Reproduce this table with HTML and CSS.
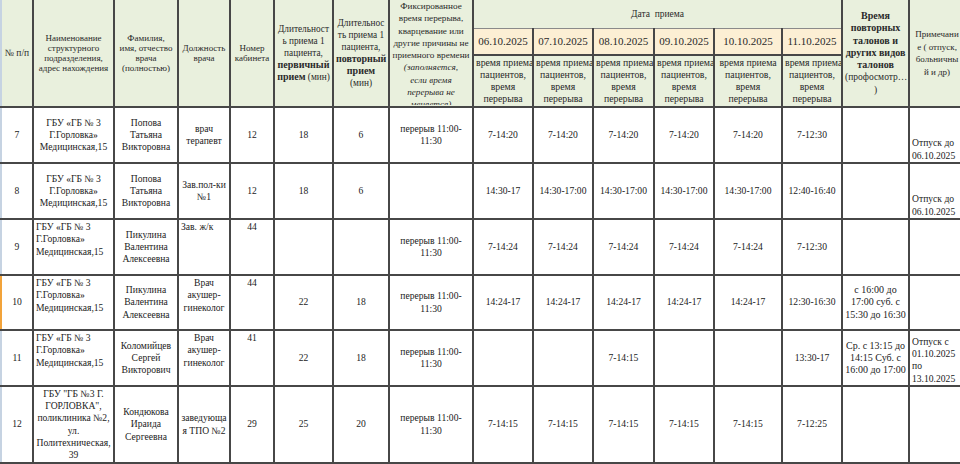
FILE: index.html
```html
<!DOCTYPE html>
<html lang="ru">
<head>
<meta charset="utf-8">
<title>График приема</title>
<link rel="stylesheet" href="styles.css">
</head>
<body>
<div class="sheet">
<table class="grid">
<colgroup>
<col class="w32"><col class="w81"><col class="w64"><col class="w52"><col class="w44"><col class="w59"><col class="w56"><col class="w84">
<col class="w60"><col class="w60"><col class="w61"><col class="w60"><col class="w68"><col class="w60"><col class="w67"><col class="w56">
</colgroup>
<thead>
<tr class="h1">
<th rowspan="3" class="c1 num">№ п/п</th>
<th rowspan="3">Наименование<br>структурного<br>подразделения,<br>адрес нахождения</th>
<th rowspan="3">Фамилия,<br>имя, отчество<br>врача<br>(полностью)</th>
<th rowspan="3">Должность<br>врача</th>
<th rowspan="3">Номер<br>кабинета</th>
<th rowspan="3" class="tall">Длительност<br>ь приема 1<br>пациента,<br><b>первичный</b><br><b>прием</b> (мин)</th>
<th rowspan="3" class="tall">Длительнос<br>ть приема 1<br>пациента,<br><b>повторный</b><br><b>прием</b><br>(мин)</th>
<th rowspan="3" class="brk"><div class="clip">Фиксированное<br>время перерыва,<br>кварцевание или<br>другие причины не<br>приемного времени<br><i>(заполняется,<br>если время<br>перерыва не<br>меняется)</i></div></th>
<th colspan="6" class="dates-title">Дата&nbsp; приема</th>
<th rowspan="3" class="rep"><b>Время<br>повторных<br>талонов и<br>других видов<br>талонов</b><br>(профосмотр…<br>)</th>
<th rowspan="3" class="note">Примечани<br>е ( отпуск,<br>больничны<br>й и др)</th>
</tr>
<tr class="h2">
<th class="date">06.10.2025</th><th class="date">07.10.2025</th><th class="date">08.10.2025</th><th class="date">09.10.2025</th><th class="date">10.10.2025</th><th class="date">11.10.2025</th>
</tr>
<tr class="h3">
<th class="sub">время приема<br>пациентов,<br>время<br>перерыва</th>
<th class="sub">время приема<br>пациентов,<br>время<br>перерыва</th>
<th class="sub">время приема<br>пациентов,<br>время<br>перерыва</th>
<th class="sub">время приема<br>пациентов,<br>время<br>перерыва</th>
<th class="sub">время приема<br>пациентов,<br>время<br>перерыва</th>
<th class="sub">время приема<br>пациентов,<br>время<br>перерыва</th>
</tr>
</thead>
<tbody>
<tr class="r56">
<td class="c1">7</td>
<td>ГБУ «ГБ № 3<br>Г.Горловка»<br>Медицинская,15</td>
<td>Попова<br>Татьяна<br>Викторовна</td>
<td>врач<br>терапевт</td>
<td>12</td><td>18</td><td>6</td>
<td>перерыв 11:00-<br>11:30</td>
<td>7-14:20</td><td>7-14:20</td><td>7-14:20</td><td>7-14:20</td><td>7-14:20</td><td>7-12:30</td>
<td></td>
<td class="bl">Отпуск до<br>06.10.2025</td>
</tr>
<tr class="r56">
<td class="c1">8</td>
<td>ГБУ «ГБ № 3<br>Г.Горловка»<br>Медицинская,15</td>
<td>Попова<br>Татьяна<br>Викторовна</td>
<td>Зав.пол-ки<br>№1</td>
<td>12</td><td>18</td><td>6</td>
<td></td>
<td>14:30-17</td><td>14:30-17:00</td><td>14:30-17:00</td><td>14:30-17:00</td><td>14:30-17:00</td><td>12:40-16:40</td>
<td></td>
<td class="bl">Отпуск до<br>06.10.2025</td>
</tr>
<tr class="r56">
<td class="c1">9</td>
<td class="tl">ГБУ «ГБ № 3<br>Г.Горловка»<br>Медицинская,15</td>
<td>Пикулина<br>Валентина<br>Алексеевна</td>
<td class="tl">Зав. ж/к</td>
<td class="tc">44</td><td></td><td></td>
<td>перерыв 11:00-<br>11:30</td>
<td>7-14:24</td><td>7-14:24</td><td>7-14:24</td><td>7-14:24</td><td>7-14:24</td><td>7-12:30</td>
<td></td>
<td></td>
</tr>
<tr class="r55">
<td class="c1 sel">10</td>
<td class="tl">ГБУ «ГБ № 3<br>Г.Горловка»<br>Медицинская,15</td>
<td>Пикулина<br>Валентина<br>Алексеевна</td>
<td class="tc">Врач<br>акушер-<br>гинеколог</td>
<td class="tc">44</td><td>22</td><td>18</td>
<td>перерыв 11:00-<br>11:30</td>
<td>14:24-17</td><td>14:24-17</td><td>14:24-17</td><td>14:24-17</td><td>14:24-17</td><td>12:30-16:30</td>
<td class="rep-cell">с 16:00 до<br>17:00 суб. с<br>15:30 до 16:30</td>
<td></td>
</tr>
<tr class="r56">
<td class="c1">11</td>
<td class="tl">ГБУ «ГБ № 3<br>Г.Горловка»<br>Медицинская,15</td>
<td>Коломийцев<br>Сергей<br>Викторович</td>
<td class="tc">Врач<br>акушер-<br>гинеколог</td>
<td class="tc">41</td><td>22</td><td>18</td>
<td>перерыв 11:00-<br>11:30</td>
<td></td><td></td><td>7-14:15</td><td></td><td></td><td>13:30-17</td>
<td class="rep-cell">Ср. с 13:15 до<br>14:15 Суб. с<br>16:00 до 17:00</td>
<td class="bl">Отпуск с<br>01.10.2025<br>по<br>13.10.2025</td>
</tr>
<tr class="r77">
<td class="c1">12</td>
<td>ГБУ "ГБ №3 Г.<br>ГОРЛОВКА",<br>поликлиника №2,<br>ул.<br>Политехническая,<br>39</td>
<td>Кондюкова<br>Ираида<br>Сергеевна</td>
<td>заведующа<br>я ТПО №2</td>
<td>29</td><td>25</td><td>20</td>
<td>перерыв 11:00-<br>11:30</td>
<td>7-14:15</td><td>7-14:15</td><td>7-14:15</td><td>7-14:15</td><td>7-14:15</td><td>7-12:25</td>
<td></td>
<td></td>
</tr>
</tbody>
</table>
</div>
</body>
</html>
```

FILE: styles.css
```css
html, body {
  margin: 0;
  padding: 0;
  overflow: hidden;
  background: #ffffff;
}
body {
  font-family: "Liberation Serif", "Times New Roman", serif;
  color: #222222;
}
.sheet {
  width: 960px;
  height: 464px;
  overflow: hidden;
}
.grid {
  border-collapse: collapse;
  table-layout: fixed;
  width: 964px;
}
.w32 { width: 32px; }
.w81 { width: 81px; }
.w64 { width: 64px; }
.w52 { width: 52px; }
.w44 { width: 44px; }
.w59 { width: 59px; }
.w56 { width: 56px; }
.w84 { width: 84px; }
.w60 { width: 60px; }
.w61 { width: 61px; }
.w68 { width: 68px; }
.w67 { width: 67px; }

.grid th,
.grid td {
  border: 2px solid #474747;
  padding: 0 2px;
  text-align: center;
  vertical-align: middle;
  overflow: hidden;
  white-space: nowrap;
}
.grid .c1 {
  border-left: 2px solid #c6d3e2;
}
.grid .c1.sel {
  border-left-color: #f2a33a;
}

thead th {
  background: #e9f0dd;
  font-weight: normal;
  font-size: 9px;
  line-height: 10px;
  color: #2a2a2a;
}
.h1 th { border-top: 0; }
.h1 { height: 28px; }
.h2 { height: 27px; }
.h3 { height: 52px; }

th.num { font-size: 9.5px; }
th.tall {
  font-size: 9.3px;
  line-height: 12px;
}
th.tall b { font-size: 10px; }
.grid th.brk {
  vertical-align: top;
  font-size: 9.2px;
  line-height: 12.3px;
  padding: 0;
}
.clip {
  height: 105px;
  overflow: hidden;
}
th.dates-title {
  font-size: 9.5px;
  border-bottom: 1px solid #8a8a8a;
}
th.date {
  background: #fcefd4;
  font-size: 11px;
  border-top: 1px solid #8a8a8a;
}
th.sub {
  font-size: 9.8px;
  line-height: 12px;
}
th.rep {
  font-size: 9.5px;
  line-height: 12.3px;
}
th.rep b { font-size: 10px; }
th.note {
  font-size: 9px;
  line-height: 12.5px;
}

tbody td {
  font-size: 9.6px;
  line-height: 12.3px;
}
.r56 { height: 56px; }
.r55 { height: 55px; }
.r77 { height: 77px; }

td.tl {
  text-align: left;
  vertical-align: top;
  padding-top: 1px;
}
td.tc {
  vertical-align: top;
  padding-top: 1px;
}
td.bl {
  text-align: left;
  vertical-align: bottom;
}
td.rep-cell {
  font-size: 10px;
}
```
